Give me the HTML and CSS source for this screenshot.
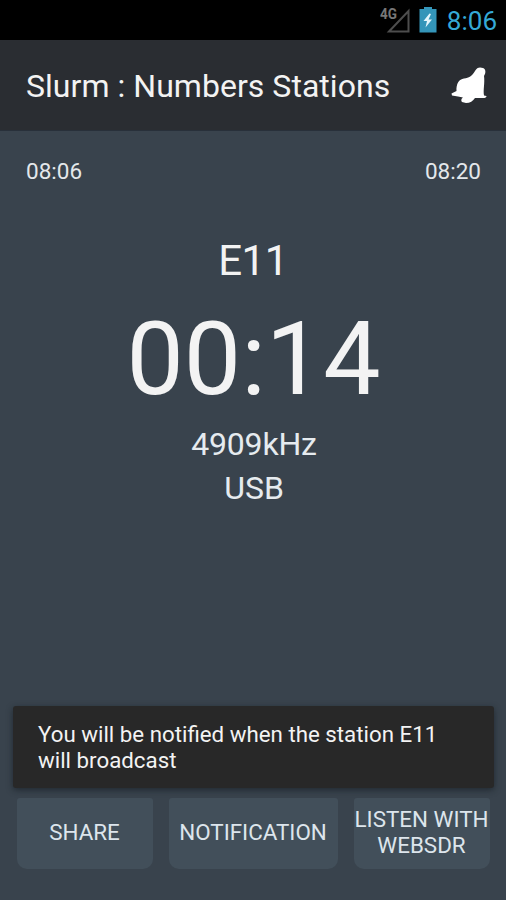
FILE: index.html
```html
<!DOCTYPE html>
<html lang="en">
<head>
	<meta charset="UTF-8">
	<title>Slurm : Numbers Stations</title>
	<link rel="stylesheet" href="styles.css">
</head>
<body>
<div class="status-bar">
	<svg class="status-bar__signal" width="32" height="34" viewBox="0 0 32 34">
		<text class="status-bar__network" x="0" y="14" textLength="17" lengthAdjust="spacingAndGlyphs">4G</text>
		<path d="M9 26.5 L28.5 6 V26.5 Z" fill="none" stroke="#4d4d4d" stroke-width="2" />
	</svg>
	<svg class="status-bar__battery" width="18" height="26" viewBox="0 0 18 26">
		<path d="M5 0 H13 V2 H17.5 V25.5 H.5 V2 H5 Z" fill="#3495b9" />
		<path d="M10.5 6.5 L4.5 14 H8 L6.5 20.5 L13 12.5 H9.5 L12 7 Z" fill="#e4f6fc" />
	</svg>
	<span class="status-bar__clock">8:06</span>
</div>

<header class="action-bar">
	<h1 class="action-bar__title">Slurm : Numbers Stations</h1>
	<svg class="action-bar__bell" width="36" height="37" viewBox="0 0 36 37">
		<path d="M24 4 C26 0 29 0 32 1 C35 2 35 6 33 9 C34 16 32 23 33 28.500 L35.500 29 Q35.500 31 32 31 L24 31 C22 34 19 36 15 36 L11 35 C9.500 33 11 31 12 30.500 L7 29.500 L1 28.500 L.5 26.500 L5.500 24 C5 17 8 12 13 11.500 C18 11 21 9 24 4 Z" fill="#fff" />
	</svg>
</header>

<main class="station">
	<div class="station__times">
		<span>08:06</span>
		<span>08:20</span>
	</div>
	<h2 class="station__name">E11</h2>
	<div class="station__countdown">00:14</div>
	<div class="station__frequency">4909kHz</div>
	<div class="station__mode">USB</div>

	<div class="station__actions">
		<button class="station__button">SHARE</button>
		<button class="station__button station__button--wide">NOTIFICATION</button>
		<button class="station__button">LISTEN WITH<br>WEBSDR</button>
	</div>
</main>

<div class="toast">You will be notified when the station E11<br>will broadcast</div>
</body>
</html>
```
FILE: styles.css
```css
* {
    box-sizing: border-box;
}

body {
    position: relative;
    display: flex;
    flex-direction: column;
    height: 900px;
    margin: 0;
    overflow: hidden;
    background-color: #39434d;
    color: #f3f3f3;
    font-family: Roboto, sans-serif;
}

.status-bar {
    display: flex;
    justify-content: flex-end;
    align-items: flex-start;
    height: 40px;
    padding-right: 9px;
    background-color: #000;
}

.status-bar__signal {
    margin: 5px 7px 0 0;
}

.status-bar__network {
    font-size: 15px;
    font-weight: 700;
    fill: #777;
}

.status-bar__battery {
    margin: 7px 10px 0 0;
}

.status-bar__clock {
    font-size: 26px;
    line-height: 42px;
    color: #35a9d6;
}

.action-bar {
    display: flex;
    justify-content: space-between;
    align-items: center;
    height: 91px;
    padding: 1px 19px 0 26px;
    background-color: #2a2d32;
    border-bottom: 1px solid #28303a;
}

.action-bar__title {
    margin: 0;
    font-size: 32px;
    font-weight: 400;
    line-height: 40px;
    letter-spacing: .04px;
}

.station {
    display: flex;
    flex: 1;
    flex-direction: column;
    align-items: center;
}

.station__times {
    display: flex;
    justify-content: space-between;
    width: 100%;
    padding: 26px 25px 0 26px;
    font-size: 22.5px;
    line-height: 28px;
    color: #e4e8eb;
}

.station__name {
    margin: 51px 0 0;
    font-size: 42px;
    font-weight: 400;
    line-height: 50px;
    letter-spacing: -.5px;
}

.station__countdown {
    margin-top: 13px;
    padding-left: 1px;
    font-size: 102px;
    line-height: 120px;
}

.station__frequency {
    margin-top: 3px;
    padding-left: 2px;
    font-size: 32px;
    line-height: 44px;
    letter-spacing: -.2px;
    color: #e6ebef;
}

.station__mode {
    padding-left: 2px;
    font-size: 32px;
    line-height: 44px;
    color: #e6ebef;
}

.station__actions {
    display: flex;
    gap: 16px;
    width: 100%;
    height: 71px;
    margin-top: auto;
    margin-bottom: 31px;
    padding: 0 16px 0 17px;
}

.station__button {
    flex: 0 0 136px;
    padding: 0 1px 3px 0;
    border: 0;
    border-radius: 3px 3px 10px 10px;
    background-color: #424f5a;
    color: #dde5ec;
    font-family: inherit;
    font-size: 22.4px;
    line-height: 26px;
    white-space: nowrap;
}

.station__button--wide {
    flex-basis: 169px;
}

.toast {
    position: absolute;
    top: 706px;
    left: 13px;
    width: 481px;
    height: 82px;
    padding: 15px 25px;
    border-radius: 3px;
    background-color: #282828;
    box-shadow: 0 2px 6px rgba(20, 28, 34, .65);
    font-size: 22.3px;
    line-height: 26px;
    white-space: nowrap;
}
```
